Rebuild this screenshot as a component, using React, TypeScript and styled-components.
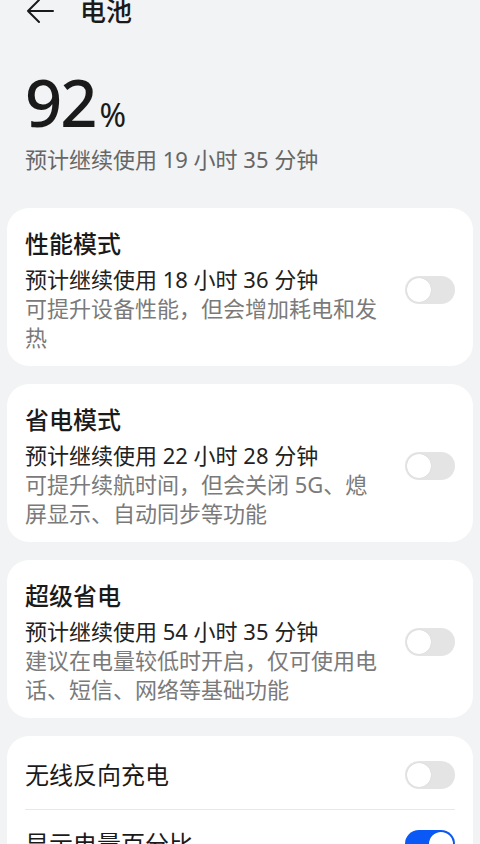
import React, { useState } from "react";
import styled, { createGlobalStyle } from "styled-components";

const GlobalStyle = createGlobalStyle`
  html, body {
    margin: 0;
    padding: 0;
    background: #f1f3f5;
  }
  body {
    font-family: "Noto Sans", "Noto Sans CJK SC", sans-serif;
    color: #1a1a1a;
    overflow: hidden;
  }
`;

const Page = styled.div`
  width: 480px;
  height: 844px;
  box-sizing: border-box;
  padding: 0 7px;
  overflow: hidden;
`;

const Header = styled.div`
  display: flex;
  align-items: center;
  height: 22px;
  padding-left: 19px;
  gap: 26px;
`;

const Title = styled.div`
  font-size: 26px;
  font-weight: 500;
  line-height: 22px;
  color: #1a1a1a;
`;

const Summary = styled.div`
  padding: 47px 18px 0;
`;

const Level = styled.div`
  display: flex;
  align-items: baseline;
  line-height: 66px;
  height: 66px;
`;

const Big = styled.span`
  font-size: 65px;
  font-weight: 500;
  letter-spacing: -2px;
`;

const Percent = styled.span`
  font-size: 32px;
  font-weight: 400;
  margin-left: 4px;
`;

const Remain = styled.div`
  margin-top: 9px;
  font-size: 22px;
  line-height: 30px;
  color: #666;
`;

const Cards = styled.div`
  display: flex;
  flex-direction: column;
  gap: 18px;
  margin-top: 34px;
`;

const Card = styled.div<{ $list?: boolean }>`
  background: #fff;
  border-radius: 22px;
  padding: ${(p) => (p.$list ? "5px 18px" : "20px 18px 14px")};
  display: flex;
  flex-direction: ${(p) => (p.$list ? "column" : "row")};
  align-items: ${(p) => (p.$list ? "stretch" : "center")};
  gap: ${(p) => (p.$list ? "0" : "24px")};
`;

const Body = styled.div`
  flex: 1;
  min-width: 0;
`;

const ModeName = styled.div`
  font-size: 24px;
  font-weight: 500;
  line-height: 32px;
`;

const Estimate = styled.div`
  margin-top: 4px;
  font-size: 22px;
  line-height: 30px;
  color: #222;
`;

const Desc = styled.div`
  font-size: 22px;
  line-height: 29px;
  color: #7a7a7a;
`;

const Row = styled.div<{ $divider?: boolean }>`
  display: flex;
  align-items: center;
  justify-content: space-between;
  height: 68px;
  border-bottom: ${(p) => (p.$divider ? "1px solid #e8e8e8" : "none")};
`;

const RowLabel = styled.div`
  font-size: 24px;
  font-weight: 400;
  line-height: 32px;
`;

const Track = styled.button<{ $on: boolean }>`
  flex: none;
  position: relative;
  width: 50px;
  height: 28px;
  border: none;
  padding: 0;
  border-radius: 14px;
  background: ${(p) => (p.$on ? "#0a59f7" : "#e4e4e4")};
  cursor: pointer;
`;

const Knob = styled.span<{ $on: boolean }>`
  position: absolute;
  top: 2px;
  left: ${(p) => (p.$on ? "24px" : "2px")};
  width: 24px;
  height: 24px;
  border-radius: 50%;
  background: #fff;
  box-shadow: 0 0 1px rgba(0, 0, 0, 0.15);
`;

const Toggle = ({ initial = false }: { initial?: boolean }) => {
  const [on, setOn] = useState(initial);
  return (
    <Track $on={on} onClick={() => setOn(!on)} aria-pressed={on}>
      <Knob $on={on} />
    </Track>
  );
};

const BackArrow = () => (
  <svg width="28" height="26" viewBox="0 0 28 26" fill="none">
    <path
      d="M27 13H2M13 2L2 13L13 24"
      stroke="#1a1a1a"
      strokeWidth="2"
      strokeLinecap="round"
      strokeLinejoin="round"
    />
  </svg>
);

const modes = [
  {
    name: "性能模式",
    est: "预计继续使用 18 小时 36 分钟",
    desc: "可提升设备性能，但会增加耗电和发热",
  },
  {
    name: "省电模式",
    est: "预计继续使用 22 小时 28 分钟",
    desc: "可提升续航时间，但会关闭 5G、熄屏显示、自动同步等功能",
  },
  {
    name: "超级省电",
    est: "预计继续使用 54 小时 35 分钟",
    desc: "建议在电量较低时开启，仅可使用电话、短信、网络等基础功能",
  },
];

const App = () => {
  return (
    <Page>
      <GlobalStyle />
      <Header>
        <BackArrow />
        <Title>电池</Title>
      </Header>
      <Summary>
        <Level>
          <Big>92</Big>
          <Percent>%</Percent>
        </Level>
        <Remain>预计继续使用 19 小时 35 分钟</Remain>
      </Summary>
      <Cards>
        {modes.map((m) => (
          <Card key={m.name}>
            <Body>
              <ModeName>{m.name}</ModeName>
              <Estimate>{m.est}</Estimate>
              <Desc>{m.desc}</Desc>
            </Body>
            <Toggle />
          </Card>
        ))}
        <Card $list>
          <Row $divider>
            <RowLabel>无线反向充电</RowLabel>
            <Toggle />
          </Row>
          <Row>
            <RowLabel>显示电量百分比</RowLabel>
            <Toggle initial />
          </Row>
        </Card>
      </Cards>
    </Page>
  );
};

export default App;
